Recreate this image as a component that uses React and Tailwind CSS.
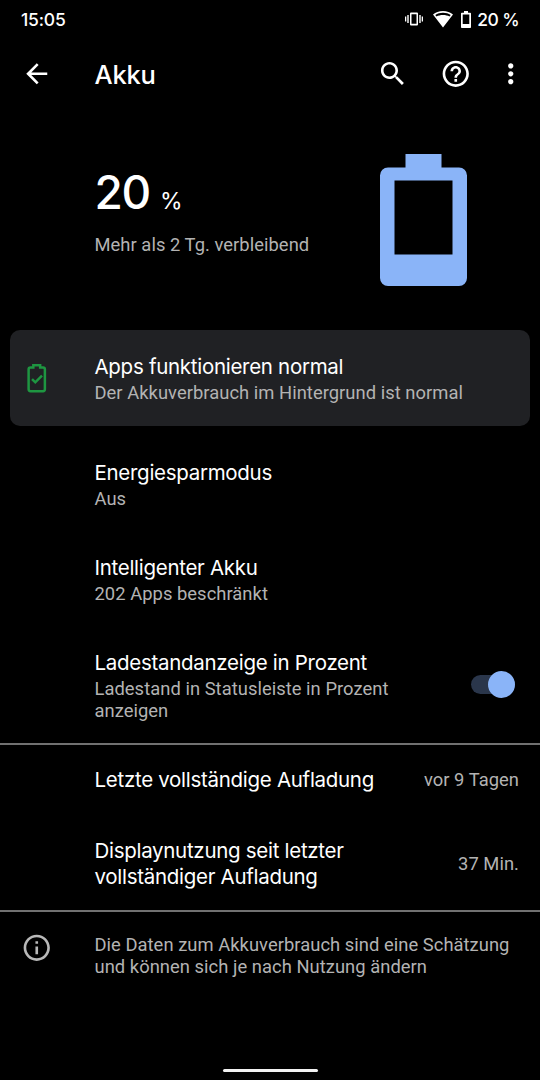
import React, { useState } from "react";

const Icon = ({ className, children }) => (
  <svg viewBox="0 0 24 24" fill="currentColor" className={className}>
    {children}
  </svg>
);

const StatusBar = () => (
  <div className="flex h-[38px] items-center justify-between pl-[21px] pr-[21px] font-['Inter',sans-serif] font-medium text-[17.5px] leading-none">
    <span className="pt-px tracking-[-0.2px]">15:05</span>
    <div className="flex items-center">
      <svg viewBox="0 0 18 14" fill="currentColor" className="mr-[10px] h-[14px] w-[18px]">
        <path d="M0 4.5h1.3v5H0zM2.3 3h1.4v8H2.3zM14.3 3h1.4v8h-1.4zM16.7 4.5H18v5h-1.3z" />
        <path fillRule="evenodd" d="M6 .5h6a1 1 0 0 1 1 1v11a1 1 0 0 1-1 1H6a1 1 0 0 1-1-1v-11a1 1 0 0 1 1-1zM6.5 2.3v9.400h5V2.3z" />
      </svg>
      <svg viewBox="0 0 20 17" fill="currentColor" className="mr-[8px] h-[17px] w-[20px]">
        <path fillRule="evenodd" d="M10 0C6.100 0 2.700 1.300 0 3.500l10 13L20 3.500C17.300 1.300 13.900 0 10 0zM10 1.700c3 0 5.500 .8 7.700 2.200l-1.200 1.500C14.700 4.400 12.500 3.900 10 3.900s-4.700 .5-6.500 1.500L2.300 3.900C4.500 2.500 7 1.700 10 1.700z" />
      </svg>
      <svg viewBox="0 0 10 17" fill="currentColor" className="mr-[6px] h-[17px] w-[10px]">
        <path fillRule="evenodd" d="M3 0h4v1.700h2.200a.8.8 0 0 1 .8.8v13.700a.8.8 0 0 1-.8.8H.8a.8.8 0 0 1-.8-.8V2.500a.8.8 0 0 1 .8-.8H3zM1.700 3.500v9.500h6.600V3.500z" />
      </svg>
      <span className="pt-px tracking-[-0.6px]">20 %</span>
    </div>
  </div>
);

const Toolbar = () => (
  <header className="flex h-[71px] items-center pl-[21px] pr-[13.5px]">
    <Icon className="h-[31.5px] w-[31.5px]">
      <path d="M20 11H7.830l5.590-5.590L12 4l-8 8 8 8 1.410-1.410L7.830 13H20v-2z" />
    </Icon>
    <h1 className="ml-[42px] flex-1 pt-[3px] font-['Inter',sans-serif] text-[25.5px] font-medium tracking-[-0.2px]">
      Akku
    </h1>
    <div className="flex items-center">
      <Icon className="mr-[31.5px] h-[31.5px] w-[31.5px]">
        <path d="M15.500 14h-.79l-.28-.27C15.410 12.590 16 11.110 16 9.500 16 5.910 13.090 3 9.500 3S3 5.910 3 9.500 5.910 16 9.500 16c1.610 0 3.090-.59 4.230-1.570l.27.28v.79l5 4.990L20.490 19l-4.990-5zm-6 0C7.010 14 5 11.990 5 9.500S7.010 5 9.500 5 14 7.010 14 9.500 11.990 14 9.500 14z" />
      </Icon>
      <Icon className="mr-[23.5px] h-[31.5px] w-[31.5px]">
        <path d="M11 18h2v-2h-2v2zm1-16C6.480 2 2 6.480 2 12s4.480 10 10 10 10-4.480 10-10S17.520 2 12 2zm0 18c-4.410 0-8-3.590-8-8s3.590-8 8-8 8 3.590 8 8-3.590 8-8 8zm0-14c-2.210 0-4 1.790-4 4h2c0-1.100.9-2 2-2s2 .9 2 2c0 2-3 1.750-3 5h2c0-2.250 3-2.500 3-5 0-2.210-1.790-4-4-4z" />
      </Icon>
      <Icon className="h-[31.5px] w-[31.5px]">
        <path d="M12 8c1.100 0 2-.9 2-2s-.9-2-2-2-2 .9-2 2 .9 2 2 2zm0 2c-1.100 0-2 .9-2 2s.9 2 2 2 2-.9 2-2-.9-2-2-2zm0 6c-1.100 0-2 .9-2 2s.9 2 2 2 2-.9 2-2-.9-2-2-2z" />
      </Icon>
    </div>
  </header>
);

const Title = ({ children, className = "" }) => (
  <div className={`font-['Inter',sans-serif] text-[20.5px] leading-[26px] tracking-[-0.29px] whitespace-nowrap ${className}`}>{children}</div>
);

const Summary = ({ children, className = "" }) => (
  <div className={`text-[18.375px] leading-[21.5px] tracking-[0.04px] whitespace-nowrap text-[#b3b3b3] ${className}`}>{children}</div>
);

const BatteryHeader = () => (
  <section className="flex h-[221px] justify-between pl-[94.5px] pr-[73px]">
    <div className="pt-[54px]">
      <div className="flex h-[58px] items-baseline font-['Inter',sans-serif] leading-[58px]">
        <span className="text-[46px] font-medium tracking-[-1.3px]">20</span>
        <span className="ml-[10px] text-[23px]">%</span>
      </div>
      <Summary className="mt-[13px]">Mehr als 2 Tg. verbleibend</Summary>
    </div>
    <svg viewBox="0 0 87 132" fill="#8ab4f8" className="mt-[45px] h-[132px] w-[87px]">
      <path fillRule="evenodd" d="M25.500 0h36v13.500H79a8 8 0 0 1 8 8V124a8 8 0 0 1-8 8H8a8 8 0 0 1-8-8V21.500a8 8 0 0 1 8-8h17.500zM14.500 26.500v74h58v-74z" />
    </svg>
  </section>
);

const StatusCard = () => (
  <section className="mx-[10px] flex h-[96px] items-center rounded-[10px] bg-[#202124] pl-[11px]">
    <Icon className="h-[31.5px] w-[31.5px] text-[#1e9641]">
      <path
        fill="none"
        stroke="currentColor"
        strokeWidth="1.900"
        d="M9.400 4.200V2.500h5.200v1.700h2.200a1.400 1.400 0 0 1 1.400 1.400v15.200a1.400 1.400 0 0 1-1.400 1.400H7.200a1.400 1.400 0 0 1-1.400-1.400V5.600a1.400 1.400 0 0 1 1.400-1.400z"
      />
      <path fill="none" stroke="currentColor" strokeWidth="1.900" d="M8.400 13l2.500 2.500 5.100-5.100" />
    </Icon>
    <div className="ml-[42px] pt-[2px]">
      <Title>Apps funktionieren normal</Title>
      <Summary className="mt-[2px]">Der Akkuverbrauch im Hintergrund ist normal</Summary>
    </div>
  </section>
);

const Switch = ({ checked, onChange }) => (
  <button
    role="switch"
    aria-checked={checked}
    onClick={() => onChange(!checked)}
    className={`flex h-[19px] w-[44px] items-center rounded-full ${checked ? "justify-end bg-[#2a364b]" : "bg-[#444444]"}`}
  >
    <span className="h-[27px] w-[27px] shrink-0 rounded-full bg-[#8ab4f8]" />
  </button>
);

export default function App() {
  const [showPercent, setShowPercent] = useState(true);

  return (
    <div className="flex h-[1080px] w-[540px] flex-col overflow-hidden bg-black font-['Roboto',sans-serif] text-white">
      <StatusBar />
      <Toolbar />
      <BatteryHeader />
      <StatusCard />

      <div className="mt-[10px] flex h-[95px] flex-col pl-[94.5px] pt-[23.5px]">
        <Title>Energiesparmodus</Title>
        <Summary className="mt-[2px]">Aus</Summary>
      </div>
      <div className="flex h-[95px] flex-col pl-[94.5px] pt-[23.5px]">
        <Title>Intelligenter Akku</Title>
        <Summary className="mt-[2px]">202 Apps beschränkt</Summary>
      </div>
      <div className="flex h-[117px] items-center justify-between pl-[94.5px] pr-[25.5px]">
        <div className="pt-[2px]">
          <Title>Ladestandanzeige in Prozent</Title>
          <Summary className="mt-[2px]">
            Ladestand in Statusleiste in Prozent
            <br />
            anzeigen
          </Summary>
        </div>
        <Switch checked={showPercent} onChange={setShowPercent} />
      </div>

      <div className="flex h-[71px] items-center justify-between border-t-[2px] border-[#717171] pl-[94.5px] pr-[21px]">
        <Title>Letzte vollständige Aufladung</Title>
        <Summary>vor 9 Tagen</Summary>
      </div>
      <div className="flex h-[98px] items-center justify-between border-b-[2px] border-[#717171] pl-[94.5px] pr-[21px] pt-[3px]">
        <Title>
          Displaynutzung seit letzter
          <br />
          vollständiger Aufladung
        </Title>
        <Summary>37 Min.</Summary>
      </div>

      <footer className="flex flex-1 items-start pl-[21px] pt-[19.5px]">
        <Icon className="h-[31.5px] w-[31.5px] text-[#b8b8b8]">
          <path d="M11 7h2v2h-2zm0 4h2v6h-2zm1-9C6.480 2 2 6.480 2 12s4.480 10 10 10 10-4.480 10-10S17.520 2 12 2zm0 18c-4.410 0-8-3.590-8-8s3.590-8 8-8 8 3.590 8 8-3.590 8-8 8z" />
        </Icon>
        <Summary className="ml-[42px] mt-[2.5px]">
          Die Daten zum Akkuverbrauch sind eine Schätzung
          <br />
          und können sich je nach Nutzung ändern
        </Summary>
      </footer>
      <div className="mb-[8px] h-[3px] w-[95px] self-center rounded-full bg-[#f2f2f2]" />
    </div>
  );
}
